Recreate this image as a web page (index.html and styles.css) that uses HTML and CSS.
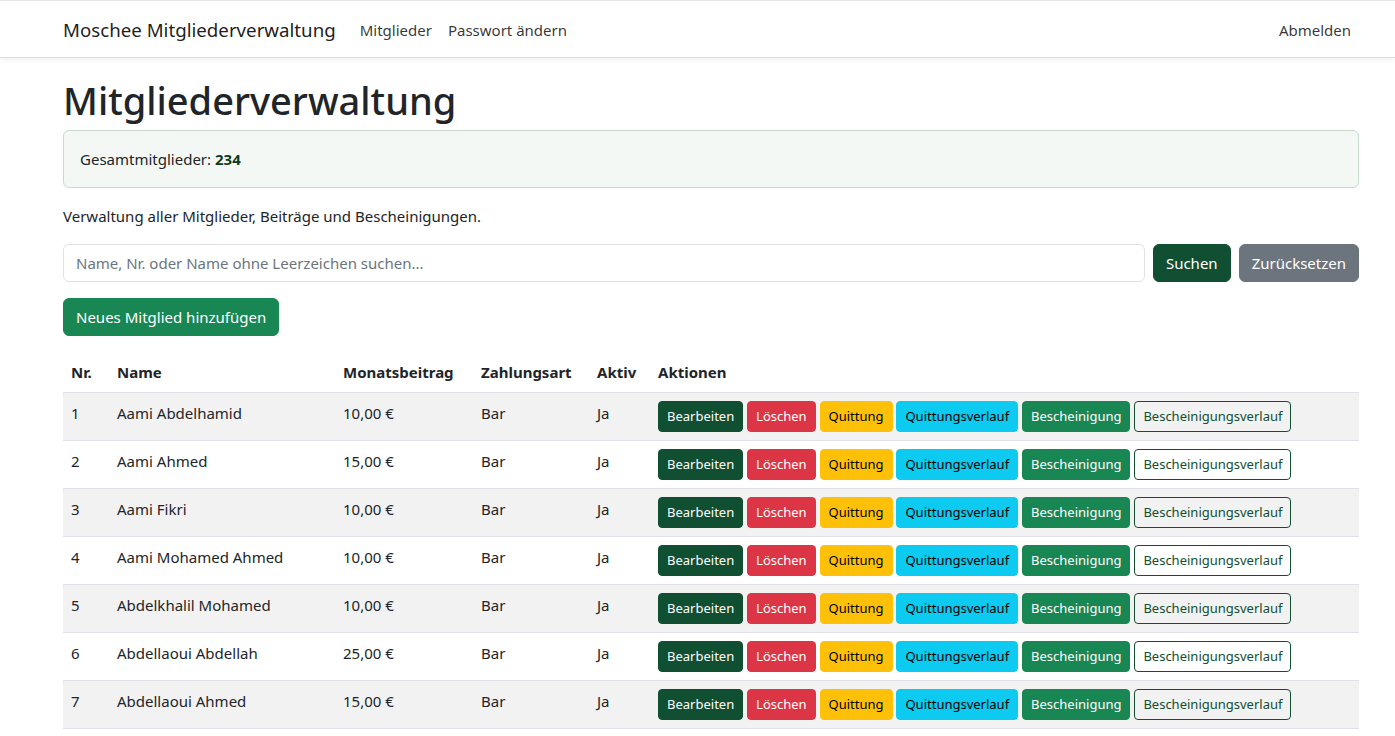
FILE: index.html
```html
<!DOCTYPE html>
<html lang="de">
<head>
<meta charset="utf-8">
<title>Mitgliederverwaltung</title>
<link rel="stylesheet" href="styles.css">
</head>
<body>
<nav class="navbar">
  <div class="container nav-inner">
    <a class="brand" href="#">Moschee Mitgliederverwaltung</a>
    <ul class="nav-links">
      <li><a href="#">Mitglieder</a></li>
      <li><a href="#">Passwort ändern</a></li>
    </ul>
    <ul class="nav-links nav-right">
      <li><a href="#">Abmelden</a></li>
    </ul>
  </div>
</nav>
<main class="container">
  <h1 class="title">Mitgliederverwaltung</h1>
  <div class="alert">Gesamtmitglieder: <strong>234</strong></div>
  <p class="lead-text">Verwaltung aller Mitglieder, Beiträge und Bescheinigungen.</p>
  <form class="search">
    <input class="search-input" type="text" placeholder="Name, Nr. oder Name ohne Leerzeichen suchen...">
    <button type="button" class="btn btn-dark-green">Suchen</button>
    <button type="button" class="btn btn-secondary">Zurücksetzen</button>
  </form>
  <div class="add-row"><button type="button" class="btn btn-success">Neues Mitglied hinzufügen</button></div>
  <table class="table">
    <thead>
      <tr><th class="c-nr">Nr.</th><th class="c-name">Name</th><th class="c-fee">Monatsbeitrag</th><th class="c-pay">Zahlungsart</th><th class="c-act">Aktiv</th><th>Aktionen</th></tr>
    </thead>
    <tbody id="rows">
      <tr><td>1</td><td>Aami Abdelhamid</td><td>10,00 €</td><td>Bar</td><td>Ja</td><td class="actions"><button class="btn btn-sm btn-dark-green">Bearbeiten</button> <button class="btn btn-sm btn-danger">Löschen</button> <button class="btn btn-sm btn-warning">Quittung</button> <button class="btn btn-sm btn-info">Quittungsverlauf</button> <button class="btn btn-sm btn-success">Bescheinigung</button> <button class="btn btn-sm btn-outline">Bescheinigungsverlauf</button></td></tr>
      <tr><td>2</td><td>Aami Ahmed</td><td>15,00 €</td><td>Bar</td><td>Ja</td><td class="actions"><button class="btn btn-sm btn-dark-green">Bearbeiten</button> <button class="btn btn-sm btn-danger">Löschen</button> <button class="btn btn-sm btn-warning">Quittung</button> <button class="btn btn-sm btn-info">Quittungsverlauf</button> <button class="btn btn-sm btn-success">Bescheinigung</button> <button class="btn btn-sm btn-outline">Bescheinigungsverlauf</button></td></tr>
      <tr><td>3</td><td>Aami Fikri</td><td>10,00 €</td><td>Bar</td><td>Ja</td><td class="actions"><button class="btn btn-sm btn-dark-green">Bearbeiten</button> <button class="btn btn-sm btn-danger">Löschen</button> <button class="btn btn-sm btn-warning">Quittung</button> <button class="btn btn-sm btn-info">Quittungsverlauf</button> <button class="btn btn-sm btn-success">Bescheinigung</button> <button class="btn btn-sm btn-outline">Bescheinigungsverlauf</button></td></tr>
      <tr><td>4</td><td>Aami Mohamed Ahmed</td><td>10,00 €</td><td>Bar</td><td>Ja</td><td class="actions"><button class="btn btn-sm btn-dark-green">Bearbeiten</button> <button class="btn btn-sm btn-danger">Löschen</button> <button class="btn btn-sm btn-warning">Quittung</button> <button class="btn btn-sm btn-info">Quittungsverlauf</button> <button class="btn btn-sm btn-success">Bescheinigung</button> <button class="btn btn-sm btn-outline">Bescheinigungsverlauf</button></td></tr>
      <tr><td>5</td><td>Abdelkhalil Mohamed</td><td>10,00 €</td><td>Bar</td><td>Ja</td><td class="actions"><button class="btn btn-sm btn-dark-green">Bearbeiten</button> <button class="btn btn-sm btn-danger">Löschen</button> <button class="btn btn-sm btn-warning">Quittung</button> <button class="btn btn-sm btn-info">Quittungsverlauf</button> <button class="btn btn-sm btn-success">Bescheinigung</button> <button class="btn btn-sm btn-outline">Bescheinigungsverlauf</button></td></tr>
      <tr><td>6</td><td>Abdellaoui Abdellah</td><td>25,00 €</td><td>Bar</td><td>Ja</td><td class="actions"><button class="btn btn-sm btn-dark-green">Bearbeiten</button> <button class="btn btn-sm btn-danger">Löschen</button> <button class="btn btn-sm btn-warning">Quittung</button> <button class="btn btn-sm btn-info">Quittungsverlauf</button> <button class="btn btn-sm btn-success">Bescheinigung</button> <button class="btn btn-sm btn-outline">Bescheinigungsverlauf</button></td></tr>
      <tr><td>7</td><td>Abdellaoui Ahmed</td><td>15,00 €</td><td>Bar</td><td>Ja</td><td class="actions"><button class="btn btn-sm btn-dark-green">Bearbeiten</button> <button class="btn btn-sm btn-danger">Löschen</button> <button class="btn btn-sm btn-warning">Quittung</button> <button class="btn btn-sm btn-info">Quittungsverlauf</button> <button class="btn btn-sm btn-success">Bescheinigung</button> <button class="btn btn-sm btn-outline">Bescheinigungsverlauf</button></td></tr>
    </tbody>
  </table>
</main>
</body>
</html>
```
FILE: styles.css
```css
* { box-sizing: border-box; }
html, body { margin: 0; padding: 0; }
body {
  font-family: "Segoe UI", "Noto Sans", "Open Sans", sans-serif;
  font-size: 15px;
  line-height: 24px;
  color: #212529;
  background: #fff;
}
a { text-decoration: none; }
.container {
  width: 1320px;
  margin-left: 51px;
  padding: 0 12px;
}
.navbar {
  background: #fff;
  border-top: 1px solid #e6e6e6;
  border-bottom: 1px solid #dcdcdc;
  box-shadow: 0 2px 6px rgba(0,0,0,0.06);
  height: 58px;
}
.nav-inner {
  display: flex;
  align-items: center;
  height: 57px;
}
.brand {
  font-size: 18.7px;
  color: rgba(0,0,0,0.9);
  margin-right: 16px;
  line-height: 30px;
}
.nav-links {
  list-style: none;
  margin: 0;
  padding: 0;
  display: flex;
}
.nav-links a {
  display: block;
  padding: 8px;
  color: rgba(0,0,0,0.8);
}
.nav-right { margin-left: auto; }
.title {
  font-size: 38px;
  font-weight: 500;
  line-height: 46px;
  margin: 19px 0 7px;
}
.alert {
  background: #f3f8f5;
  border: 1px solid #c5dccd;
  border-radius: 6px;
  padding: 16px;
  margin-bottom: 16px;
  color: #212529;
}
.alert strong { color: #0d3b22; }
.lead-text { margin: 0 0 16px; }
.search { display: flex; gap: 8px; margin-bottom: 16px; }
.search-input {
  flex: 1;
  font: inherit;
  padding: 6px 12px;
  border: 1px solid #dee2e6;
  border-radius: 6px;
  height: 38px;
  color: #212529;
}
.search-input::placeholder { color: #6c757d; }
.btn {
  font: inherit;
  font-size: 15px;
  line-height: 24px;
  padding: 6px 12px;
  border: 1px solid transparent;
  border-radius: 6px;
  color: #fff;
  cursor: pointer;
}
.btn-sm {
  font-size: 13px;
  line-height: 21px;
  padding: 4px 8px;
  border-radius: 4px;
}
.btn-dark-green { background: #114f32; border-color: #114f32; }
.btn-secondary { background: #6c757d; border-color: #6c757d; }
.btn-success { background: #198754; border-color: #198754; }
.btn-danger { background: #dc3545; border-color: #dc3545; }
.btn-warning { background: #ffc107; border-color: #ffc107; color: #000; }
.btn-info { background: #0dcaf0; border-color: #0dcaf0; color: #000; }
.btn-outline { background: transparent; border-color: #114f32; color: #114f32; }
.add-row { margin-bottom: 16px; }
.table {
  width: 100%;
  border-collapse: collapse;
}
.table th, .table td {
  text-align: left;
  padding: 8px;
  border-bottom: 1px solid #dee2e6;
  vertical-align: top;
}
.table th { font-weight: 700; }
.table td.actions { white-space: nowrap; }
.table tbody tr:nth-child(odd) { background: #f2f2f2; }
.c-nr { width: 46px; }
.c-name { width: 226px; }
.c-fee { width: 138px; }
.c-pay { width: 116px; }
.c-act { width: 61px; }
```
